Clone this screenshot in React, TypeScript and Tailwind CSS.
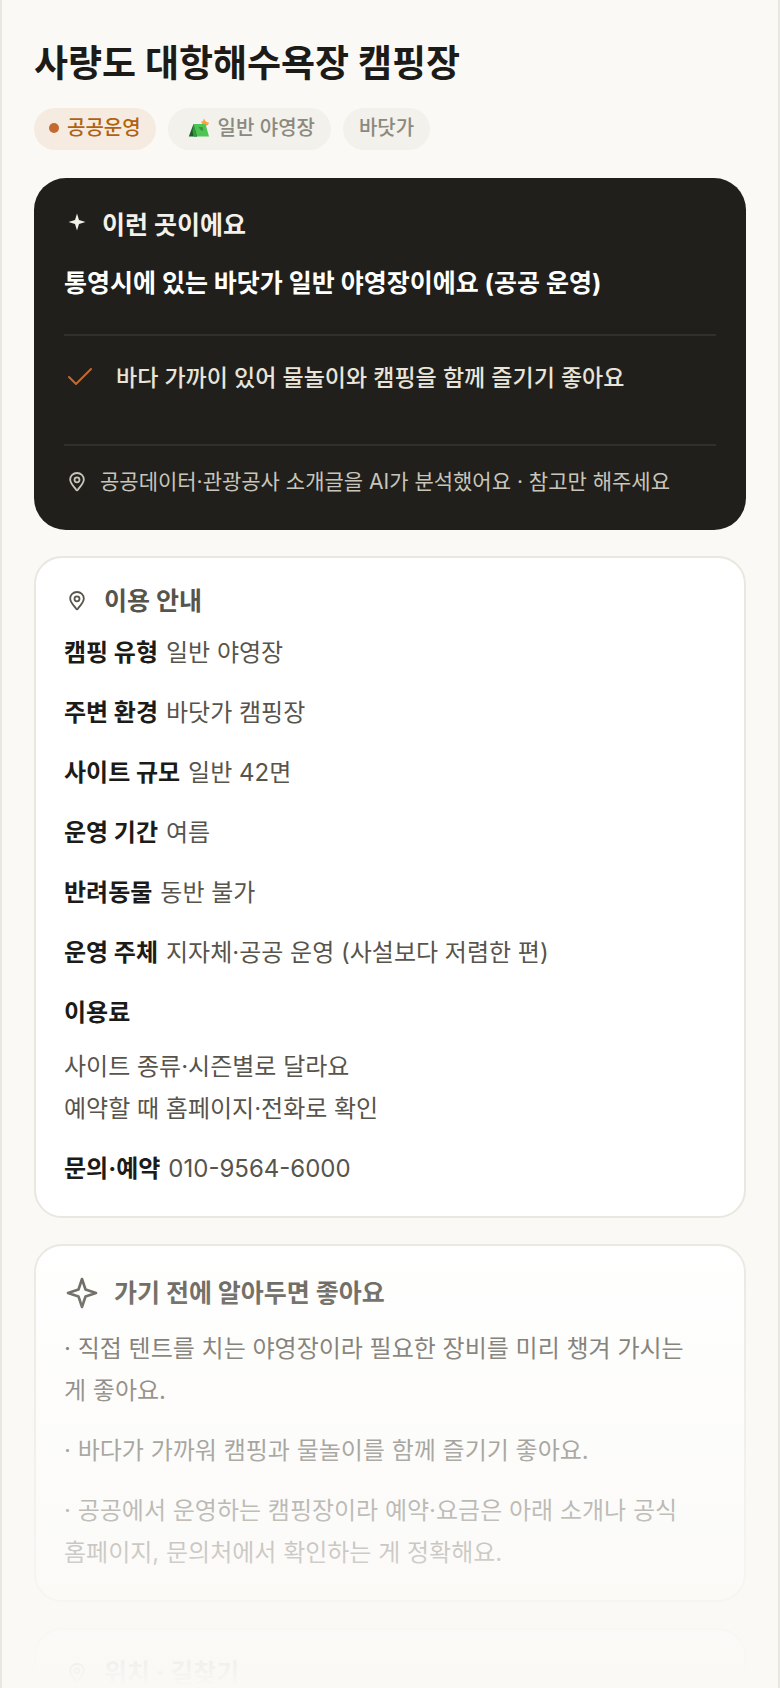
import type { ReactNode } from 'react';

interface InfoItem {
  label: string;
  value: string;
}

const infoItems: InfoItem[] = [
  { label: '캠핑 유형', value: '일반 야영장' },
  { label: '주변 환경', value: '바닷가 캠핑장' },
  { label: '사이트 규모', value: '일반 42면' },
  { label: '운영 기간', value: '여름' },
  { label: '반려동물', value: '동반 불가' },
  { label: '운영 주체', value: '지자체·공공 운영 (사설보다 저렴한 편)' },
];

const tips = [
  '직접 텐트를 치는 야영장이라 필요한 장비를 미리 챙겨 가시는 게\u00a0좋아요.',
  '바다가 가까워 캠핑과 물놀이를 함께 즐기기 좋아요.',
  '공공에서 운영하는 캠핑장이라 예약·요금은 아래 소개나 공식 홈페이지, 문의처에서 확인하는 게 정확해요.',
];

const PinIcon = () => (
  <svg viewBox="0 0 16 20" className="mx-[5px] h-5 w-4 shrink-0" fill="none" stroke="currentColor" strokeWidth="1.8" aria-hidden="true">
    <path d="M8 1C4.1 1 1.2 3.9 1.2 7.6C1.2 11.8 5.1 14.6 7 17.6C7.6 18.7 8.4 18.7 9 17.6C10.9 14.6 14.8 11.8 14.8 7.6C14.8 3.9 11.9 1 8 1Z" />
    <circle cx="8" cy="7.8" r="2.5" />
  </svg>
);

const TentIcon = () => (
  <svg viewBox="0 0 22 20" className="mx-1 h-5 w-[22px] shrink-0" aria-hidden="true">
    <path d="M13 3.6C14.8 3.6 15.8 2.2 15.6 0.4C17 2 17.4 4.2 21 4.6C20.8 7.6 17.4 9 14.6 6.8Z" fill="#ff9f3f" />
    <path d="M5.5 6H17.5L21 18.5H8Z" fill="#4cc552" />
    <path d="M5.5 6L9 18.5H0.8Z" fill="#1c5a2a" />
    <path d="M5.5 6L9 18.5H5.5L4.5 13Z" fill="#2f9a3c" />
    <path d="M10.5 9H14.5L15.5 12.5H13Z" fill="#3f8f46" />
  </svg>
);

const Card = ({ icon, title, children }: { icon: ReactNode; title: string; children?: ReactNode }) => (
  <section className="rounded-[28px] border-2 border-[#e8e7e0] bg-white px-7 pt-[22px] pb-[26px]">
    <h2 className="flex items-center text-[25px] leading-[42px] font-bold text-[#57544c]">
      {icon}
      {title}
    </h2>
    {children}
  </section>
);

export default function App() {
  return (
    <main className="relative h-screen overflow-hidden border-x-2 border-[#e8e7e0] bg-[#faf9f6] px-8 pt-[38px] font-['Inter','Noto_Sans_CJK_KR',sans-serif] break-keep">
      <h1 className="text-[37px] leading-[52px] font-bold text-[#1c1b17]">사량도 대항해수욕장 캠핑장</h1>

      <ul className="mt-[18px] flex gap-3 text-[20px] leading-10 font-medium text-[#8c897f]">
        <li className="flex items-center gap-2 rounded-full bg-[#f5ebe1] px-[15px] pb-[2px] text-[#b0620f]">
          <span className="size-[10px] rounded-full bg-[#c4692f]" />
          공공운영
        </li>
        <li className="flex items-center gap-1 rounded-full bg-[#f2f1ec] px-4 pb-[2px]">
          <TentIcon />
          일반 야영장
        </li>
        <li className="rounded-full bg-[#f2f1ec] px-4 pb-[2px]">바닷가</li>
      </ul>

      <section className="mt-7 rounded-[32px] bg-[#201f1b] px-[30px] pt-[26px] pb-8 text-white">
        <h2 className="flex items-center gap-4 text-[25px] leading-[42px] font-bold text-[#f3f1ea]">
          <svg viewBox="0 0 18 18" className="mb-[6px] ml-1 size-[18px]" fill="currentColor" aria-hidden="true">
            <path d="M9 0.5L11 7L17.5 9L11 11L9 17.5L7 11L0.5 9L7 7Z" />
          </svg>
          이런 곳이에요
        </h2>
        <p className="mt-4 text-[25px] leading-[42px] font-bold">통영시에 있는 바닷가 일반 야영장이에요 (공공 운영)</p>
        <ul className="mt-[30px] border-y-2 border-[#31302c] pt-[22px] pb-[18px]">
          <li className="flex items-center gap-6 pb-7 text-[23px] leading-[40px] font-medium text-[#e8e4d9]">
            <svg viewBox="0 0 28 24" className="mb-1 h-6 w-7" fill="none" stroke="#c4692f" strokeWidth="2" aria-hidden="true">
              <path d="M5 13L12 20L27 5" strokeLinecap="round" strokeLinejoin="round" />
            </svg>
            바다 가까이 있어 물놀이와 캠핑을 함께 즐기기 좋아요
          </li>
        </ul>
        <p className="mt-5 flex items-center gap-[10px] text-[21px] leading-8 text-[#c9c5ba]">
          <PinIcon />
          공공데이터·관광공사 소개글을 AI가 분석했어요 · 참고만 해주세요
        </p>
      </section>

      <div className="mt-[26px] flex flex-col gap-[26px] text-[24px] leading-[42px] text-[#57544c]">
        <Card icon={<span className="mr-[14px]"><PinIcon /></span>} title="이용 안내">
          <dl className="mt-[10px] flex flex-col gap-[18px]">
            {infoItems.map((item) => (
              <div key={item.label} className="flex gap-2">
                <dt className="font-bold text-[#1c1b17]">{item.label}</dt>
                <dd>{item.value}</dd>
              </div>
            ))}
            <div>
              <dt className="font-bold text-[#1c1b17]">이용료</dt>
              <dd className="mt-3">
                사이트 종류·시즌별로 달라요
                <br />
                예약할 때 홈페이지·전화로 확인
              </dd>
            </div>
            <div className="flex gap-2">
              <dt className="font-bold text-[#1c1b17]">문의·예약</dt>
              <dd>010-9564-6000</dd>
            </div>
          </dl>
        </Card>

        <Card
          icon={
            <svg viewBox="0 0 32 32" className="mt-[9px] mr-4 mb-[9px] ml-[2px] size-8" fill="none" stroke="currentColor" strokeWidth="2.6" strokeLinejoin="round" aria-hidden="true">
              <path d="M16 2L19.5 12.5L30 16L19.5 19.5L16 30L12.5 19.5L2 16L12.5 12.5Z" />
            </svg>
          }
          title="가기 전에 알아두면 좋아요"
        >
          <ul className="mt-[10px] flex flex-col gap-[18px]">
            {tips.map((tip) => (
              <li key={tip}>{`· ${tip}`}</li>
            ))}
          </ul>
        </Card>

        <Card icon={<span className="mr-[14px]"><PinIcon /></span>} title="위치 · 길찾기" />
      </div>

      <div className="pointer-events-none absolute inset-x-[-2px] bottom-0 h-[480px] bg-linear-to-b from-[#faf9f6]/0 to-[#faf9f6]" />
    </main>
  );
}
